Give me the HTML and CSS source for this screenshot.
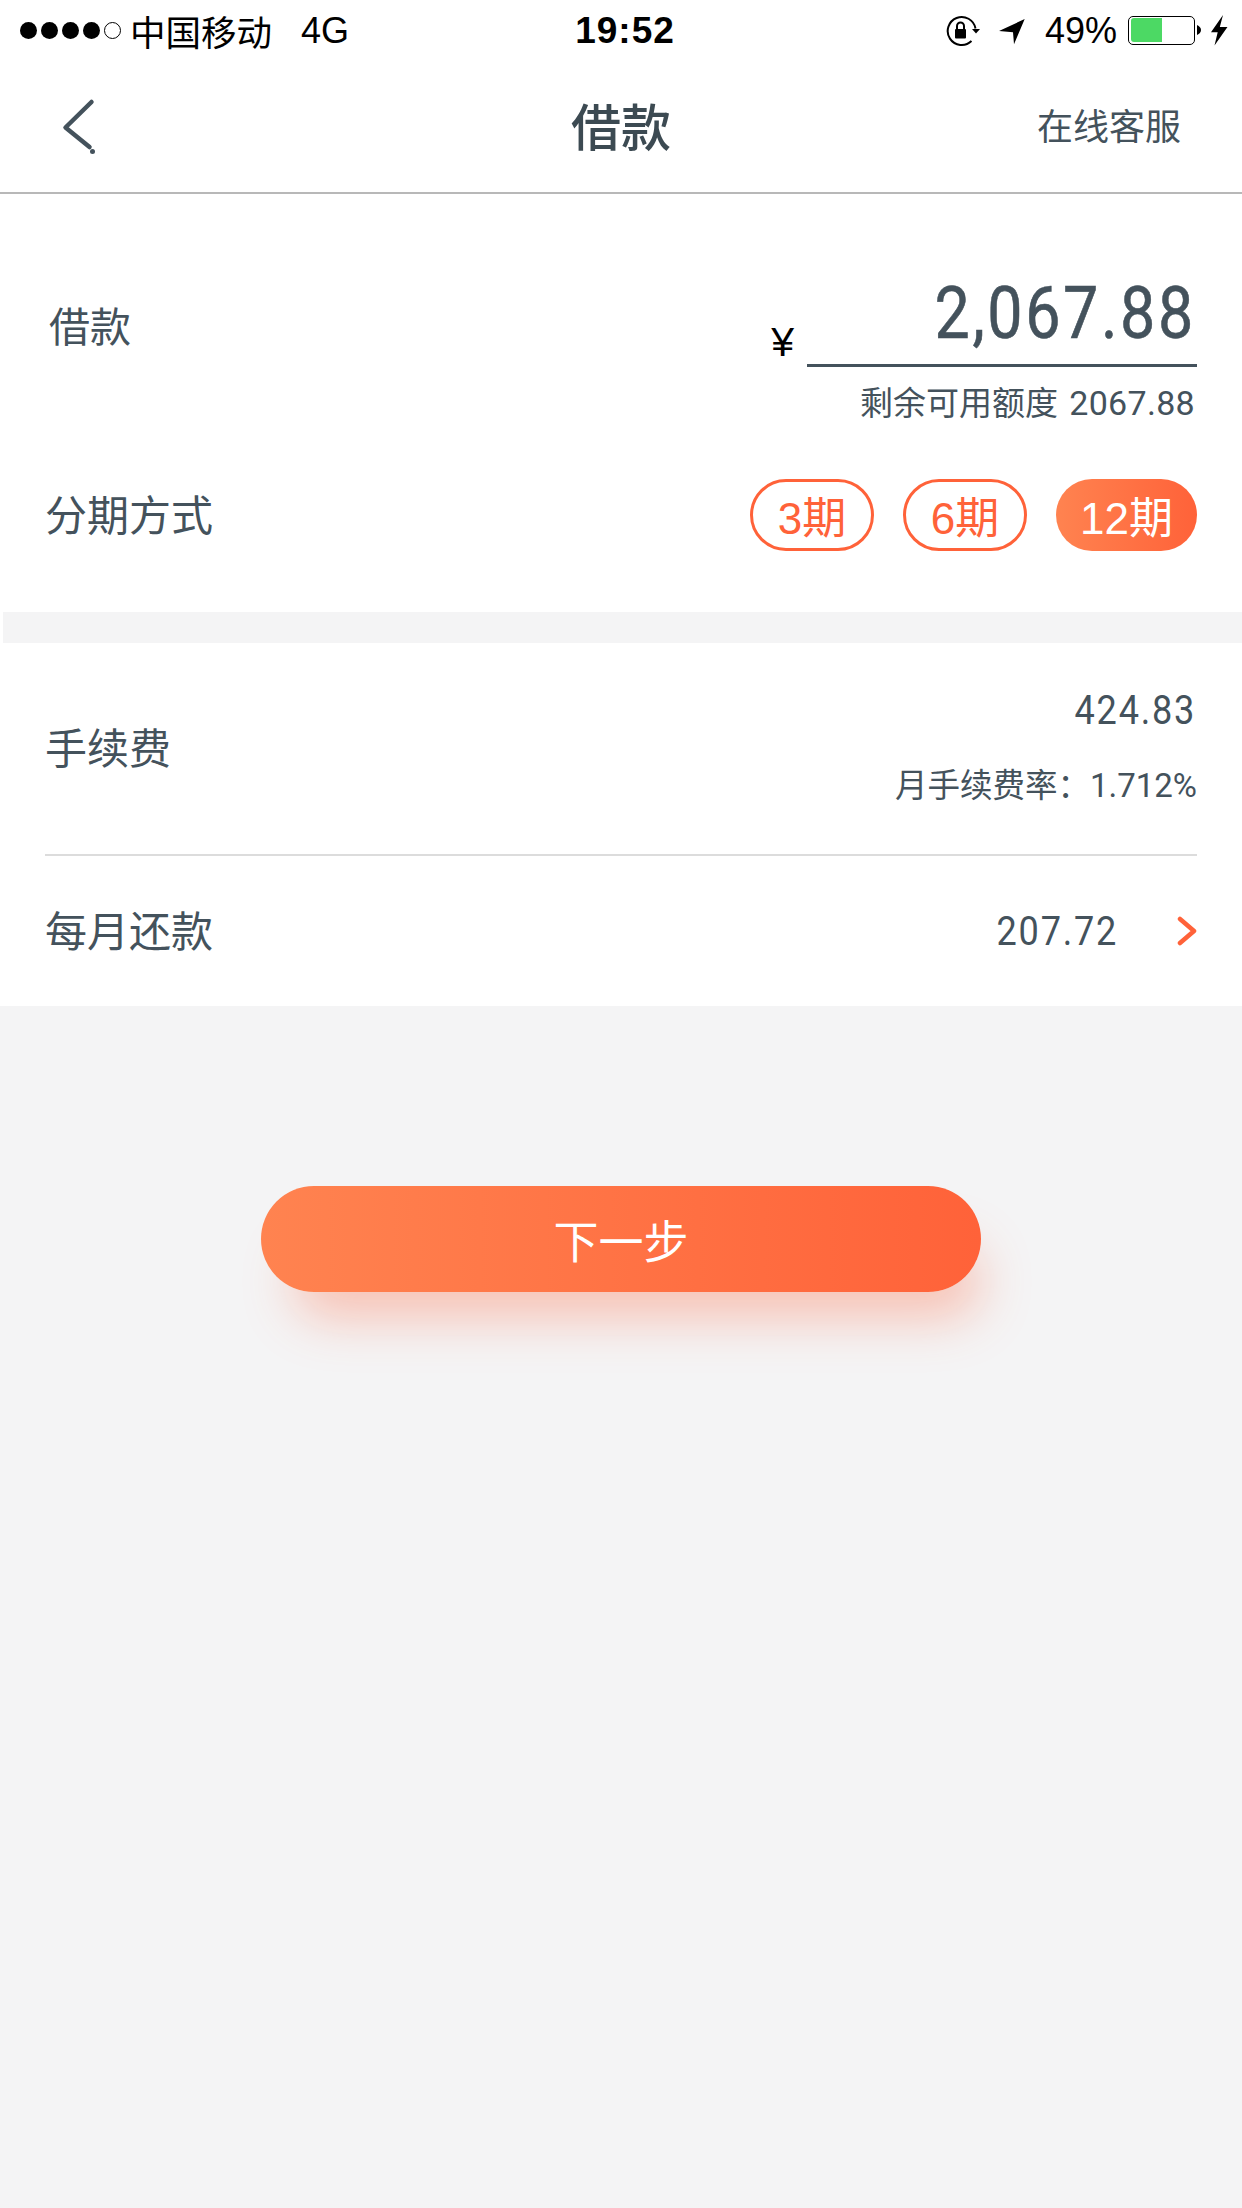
FILE: index.html
```html
<!DOCTYPE html>
<html lang="zh-CN">
<head>
<meta charset="utf-8">
<title>借款</title>
<link rel="stylesheet" href="styles.css">
</head>
<body>
<div class="page">
  <div class="status">
    <div class="status-left">
      <span class="dots"><i class="dot"></i><i class="dot"></i><i class="dot"></i><i class="dot"></i><i class="dot empty"></i></span>
      <span class="carrier">中国移动</span>
      <span class="net">4G</span>
    </div>
    <div class="time">19:52</div>
    <div class="status-right">
      <svg class="ic-lock" width="37" height="32" viewBox="0 0 37 32"><path d="M31.500 14.500A14 14 0 1 0 27.500 27" fill="none" stroke="#000" stroke-width="2"/><path d="M28 15h8l-4 4.500z" fill="#000"/><rect x="11" y="15" width="11" height="9.500" rx="1" fill="#000"/><path d="M13 15.500v-3.500a3.500 3.500 0 0 1 7 0v3.500" fill="none" stroke="#000" stroke-width="2"/></svg>
      <svg class="ic-loc" width="26" height="32" viewBox="0 0 26 32"><path d="M25.700 5 0 17l14 1.300 1 12z" fill="#000"/></svg>
      <span class="pct">49%</span>
      <span class="battery"><span class="battery-fill"></span></span>
      <svg class="nub" width="4" height="10" viewBox="0 0 4 10"><path d="M0 0c2.500 1 4 3 4 5S2.500 9 0 10z" fill="#000"/></svg>
      <svg class="ic-bolt" width="17" height="32" viewBox="0 0 16 32" preserveAspectRatio="none"><path d="M11.300 1 0 18.300h6.300L3.300 31.500 15.500 13H8.300z" fill="#000"/></svg>
    </div>
  </div>
  <header class="nav">
    <svg class="back" width="34" height="54" viewBox="0 0 34 54"><path d="M28.500 2 2.500 27.500 26.500 47" fill="none" stroke="#44525c" stroke-width="4.500" stroke-linecap="round" stroke-linejoin="round"/><circle cx="29.500" cy="51.500" r="2.500" fill="#44525c"/></svg>
    <h1 class="title">借款</h1>
    <a class="service">在线客服</a>
  </header>

  <section class="card card-top">
    <div class="row-amount">
      <span class="label label-amount">借款</span>
      <div class="amount-side">
        <div class="amount-line">
          <span class="yen">¥</span>
          <span class="amount-box"><span class="amount-text">2,067.88</span></span>
        </div>
        <div class="limit">剩余可用额度 <span class="limit-num">2067.88</span></div>
      </div>
    </div>
    <div class="row-terms">
      <span class="label">分期方式</span>
      <div class="terms">
        <span class="pill">3期</span>
        <span class="pill">6期</span>
        <span class="pill pill-on">12期</span>
      </div>
    </div>
  </section>

  <div class="gap"></div>

  <section class="card">
    <div class="row-fee">
      <span class="label">手续费</span>
      <div class="fee-side">
        <div class="num-line"><span class="num">424.83</span></div>
        <div class="rate">月手续费率：<span class="rate-num">1.712%</span></div>
      </div>
    </div>
    <div class="row-month">
      <span class="label">每月还款</span>
      <div class="month-side">
        <span class="num">207.72</span>
        <svg class="more" width="20" height="30" viewBox="0 0 20 30"><path d="M3 3l14 12L3 27" fill="none" stroke="#ff6239" stroke-width="4.500" stroke-linecap="round" stroke-linejoin="round"/></svg>
      </div>
    </div>
  </section>

  <div class="action">
    <button class="next">下一步</button>
  </div>
</div>
</body>
</html>
```

FILE: styles.css
```css
* { box-sizing: border-box; }
html, body { margin: 0; padding: 0; }
body {
  width: 1242px;
  height: 2208px;
  background: #f4f4f5;
  overflow: hidden;
  font-family: "Noto Sans CJK SC", "Liberation Sans", sans-serif;
  color: #44525c;
}
.page { width: 1242px; height: 2208px; display: flex; flex-direction: column; background: #f4f4f5; }

.status {
  height: 60px;
  background: #fff;
  position: relative;
  display: flex;
  justify-content: space-between;
  align-items: center;
  padding: 0 14px 0 20px;
  color: #000;
  font-family: "Liberation Sans", "Noto Sans CJK SC", sans-serif;
  font-size: 36px;
}
.status-left, .status-right { display: flex; align-items: center; }
.dots { display: flex; gap: 4px; width: 110px; }
.dot { width: 17px; height: 17px; border-radius: 50%; background: #000; display: block; }
.dot.empty { background: #fff; border: 1.500px solid #000; }
.carrier { font-family: "Noto Sans CJK SC", sans-serif; font-size: 35.500px; font-weight: 400; }
.net { margin-left: 29px; padding-top: 2px; font-size: 36px; }
.time { position: absolute; left: 0; right: 0; top: 1px; bottom: 0; margin-left: 8px; display: flex; align-items: center; justify-content: center; font-size: 37px; letter-spacing: 1px; font-weight: 700; pointer-events: none; }
.ic-lock { margin-right: 18px; }
.ic-loc { margin-right: 20px; }
.pct { font-size: 36px; margin-right: 11px; padding-top: 2px; }
.battery { width: 67px; height: 29px; border: 1.500px solid #000; border-radius: 5px; padding: 1.500px; display: block; }
.battery-fill { display: block; width: 31px; height: 100%; background: #4cd964; border-radius: 3px 0 0 3px; }
.nub { margin: 0 10px 0 2px; }

.nav {
  height: 134px;
  background: #fff;
  border-bottom: 2px solid #b8b8b8;
  position: relative;
  display: flex;
  align-items: center;
  justify-content: flex-end;
  padding: 0 61px 4px 0;
}
.back { position: absolute; left: 63px; top: 40px; overflow: visible; }
.title {
  position: absolute; left: 0; right: 0; top: 0; bottom: 4px;
  margin: 0; display: flex; align-items: center; justify-content: center;
  font-size: 50px; font-weight: 500; color: #3c4a52;
}
.service { font-size: 36px; color: #44525c; font-weight: 400; }

.card { background: #fff; padding: 0 45px; }
.card-top { height: 418px; }
.label { font-size: 42px; color: #44525c; font-weight: 400; line-height: 1; padding-bottom: 5px; }
.row-amount { height: 253px; display: flex; justify-content: space-between; position: relative; }
.label-amount { margin: 110px 0 0 4px; font-size: 41px; }
.amount-side { display: flex; flex-direction: column; align-items: flex-end; padding-top: 64px; }
.amount-line { display: flex; align-items: flex-end; }
.yen { font-family: "Liberation Sans", sans-serif; color: #000; font-size: 41px; line-height: 1; margin-right: 13px; margin-bottom: 4px; }
.amount-box {
  width: 390px; height: 109px;
  border-bottom: 3px solid #44525c;
  display: flex; justify-content: flex-end; padding-right: 1px;
}
.amount-text {
  display: block;
  font-family: Roboto, sans-serif; font-size: 73px; font-weight: 400; line-height: 110px;
  letter-spacing: 3px; color: #44525c;
  -webkit-text-stroke: 0.6px #44525c;
  transform: scaleX(0.86); transform-origin: right center;
}
.limit { margin-top: 14px; font-size: 33px; line-height: 40px; font-weight: 400; padding-right: 2px; }
.limit-num { font-family: Roboto, sans-serif; font-size: 34px; letter-spacing: .3px; margin-left: 4px; }

.row-terms { height: 72px; margin-top: 32px; display: flex; justify-content: space-between; align-items: center; }
.terms { display: flex; gap: 29px; }
.pill {
  width: 124px; height: 72px; border-radius: 36px;
  border: 3px solid #ff6239; color: #ff6239;
  display: flex; align-items: center; justify-content: center;
  font-family: "Liberation Sans", "Noto Sans CJK SC", sans-serif; font-size: 44px; font-weight: 400;
}
.pill-on { width: 141px; border: 0; color: #fff; background: linear-gradient(90deg, #ff8350, #ff6239); }

.gap { height: 31px; background: #f4f4f5; flex: none; border-left: 3px solid #fff; }

.num {
  display: inline-block;
  font-family: Roboto, sans-serif; font-size: 41px; letter-spacing: 2px; color: #44525c; line-height: 44px;
  transform: scaleX(0.88); transform-origin: right center;
}
.num-line { line-height: 44px; padding-right: 1px; padding-top: 1px; }
.row-fee { height: 213px; display: flex; justify-content: space-between; align-items: center; border-bottom: 2px solid #dcdcdc; }
.fee-side { text-align: right; margin-top: -4px; }
.rate { margin-top: 24px; font-size: 32.500px; line-height: 40px; font-weight: 400; }
.rate-num { font-family: Roboto, sans-serif; font-size: 33px; }
.row-month { height: 150px; display: flex; justify-content: space-between; align-items: center; }
.month-side { display: flex; align-items: center; }
.month-side .num { margin-right: 59px; }

.action { display: flex; justify-content: center; padding-top: 180px; }
.next {
  width: 720px; height: 106px; border: 0; border-radius: 53px;
  background: linear-gradient(90deg, #ff8350, #ff6239);
  box-shadow: 16px 42px 50px -16px rgba(255, 98, 57, 0.34);
  color: #fff; font-family: "Noto Sans CJK SC", sans-serif; font-size: 45px; font-weight: 400;
}
```
